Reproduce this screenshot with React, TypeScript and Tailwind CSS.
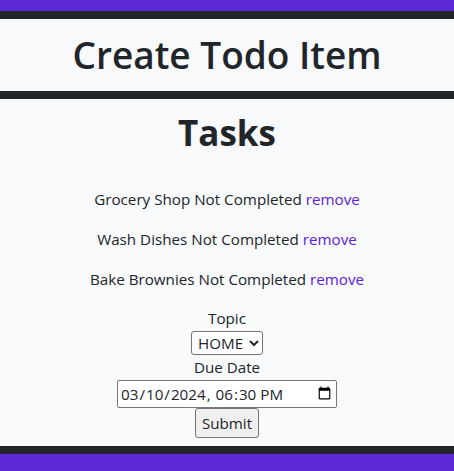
import { useState } from "react";

const tasks = [
  { id: 1, name: "Grocery Shop", completed: false },
  { id: 2, name: "Wash Dishes", completed: false },
  { id: 3, name: "Bake Brownies", completed: false },
];

export default function App() {
  const [items, setItems] = useState(tasks);

  return (
    <div className="flex min-h-[471px] flex-col bg-[#f8f9fa] font-['Open_Sans',sans-serif] text-[#212529]">
      <div className="h-[11px] bg-[#5f29d9]" />
      <header className="border-y-8 border-[#212529] bg-[#f8f9fa]">
        <h1 className="h-[72px] text-center text-[37px] font-semibold leading-[72px]">Create Todo Item</h1>
      </header>

      <main className="flex flex-1 flex-col items-center pt-[10px] text-[15.2px]">
        <h2 className="text-[35px] font-bold leading-[48px]">Tasks</h2>
        <div className="mt-[30px] flex flex-col items-center gap-4">
          {items.map((t) => (
            <p key={t.id} className="leading-6">
              {t.name} {t.completed ? "Completed" : "Not Completed"}{" "}
              <a
                href="#"
                className="text-[#5b21e0]"
                onClick={(e) => {
                  e.preventDefault();
                  setItems(items.filter((i) => i.id !== t.id));
                }}
              >
                remove
              </a>
            </p>
          ))}
        </div>

        <form className="mt-[15px] flex flex-col items-center" onSubmit={(e) => e.preventDefault()}>
          <label className="leading-[25px]">Topic</label>
          <select className="h-[24px] rounded-[3px] border border-[#767676] bg-white px-[2px] text-[15.2px]">
            <option>HOME</option>
            <option>WORK</option>
          </select>
          <label className="leading-[25px]">Due Date</label>
          <input
            type="datetime-local"
            defaultValue="2024-03-10T18:30"
            className="h-[28px] w-[220px] rounded-[2px] border border-[#767676] bg-white px-[2px] text-[15.2px]"
          />
          <button
            type="submit"
            className="h-[30px] rounded-[3px] border border-[#767676] bg-[#efefef] px-[6px] text-[15.2px]"
          >
            Submit
          </button>
        </form>
      </main>

      <div className="h-[8px] bg-[#212529]" />
      <div className="h-[17px] bg-[#5f29d9]" />
    </div>
  );
}
